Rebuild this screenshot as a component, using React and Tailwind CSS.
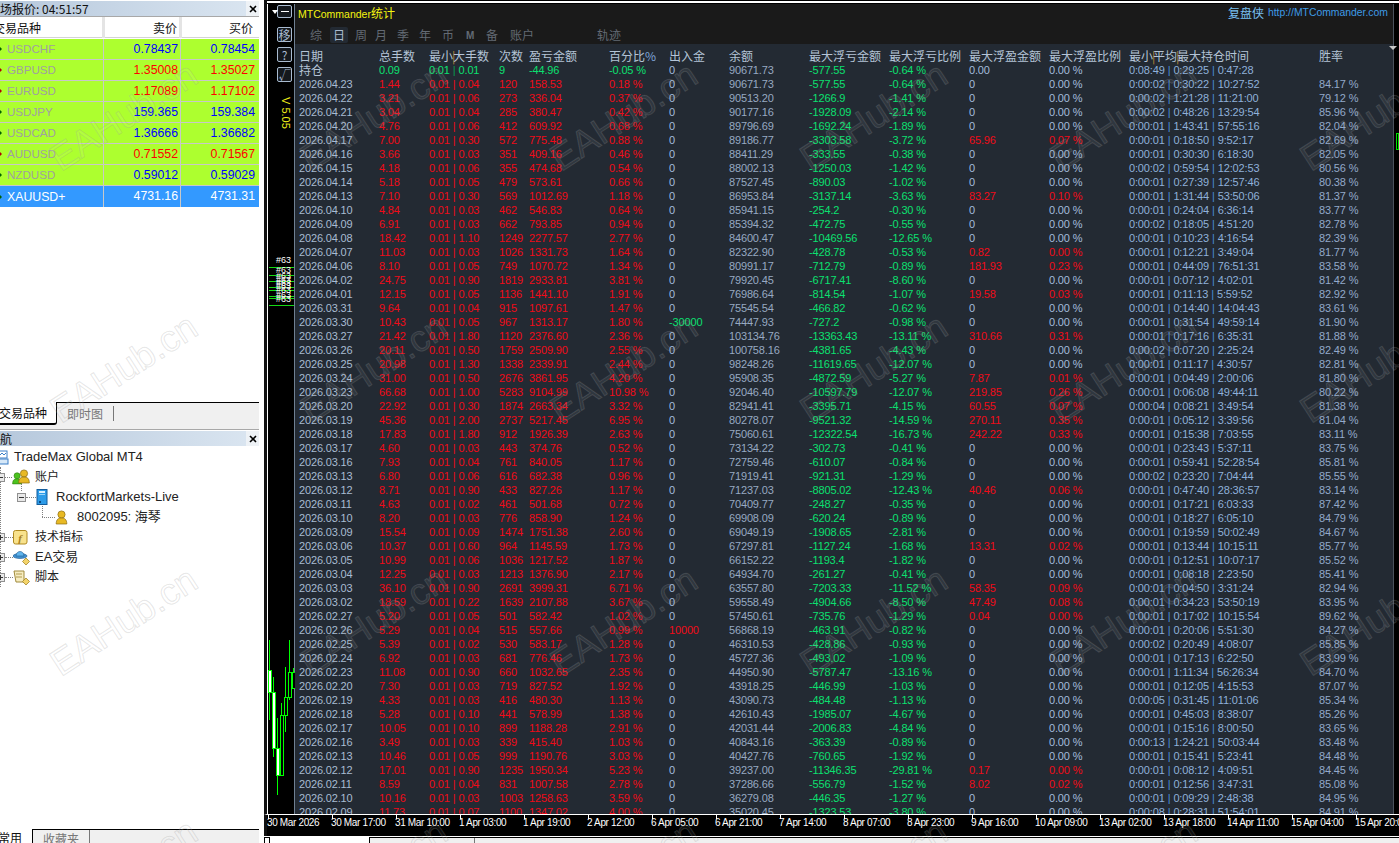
import React from "react";

const RAW = `04.23 1.44 0.04 120 158.53 0.18 0 90671.73 -577.55 -0.64 0 0.00 0:00:02 0:30:22 10:27:52 84.17
04.22 3.21 0.06 273 336.04 0.37 0 90513.20 -1266.9 -1.41 0 0.00 0:00:02 1:21:28 11:21:00 79.12
04.21 3.04 0.04 285 380.47 0.42 0 90177.16 -1928.09 -2.14 0 0.00 0:00:02 0:48:26 13:29:54 85.96
04.20 4.76 0.06 412 609.92 0.68 0 89796.69 -1692.24 -1.89 0 0.00 0:00:01 1:43:41 57:55:16 82.04
04.17 7.00 0.30 572 775.48 0.88 0 89186.77 -3303.58 -3.72 65.96 0.07 0:00:01 0:18:50 9:52:17 82.69
04.16 3.66 0.03 351 409.16 0.46 0 88411.29 -333.55 -0.38 0 0.00 0:00:01 0:30:30 6:18:30 82.05
04.15 4.18 0.06 355 474.68 0.54 0 88002.13 -1250.03 -1.42 0 0.00 0:00:02 0:59:54 12:02:53 80.56
04.14 5.18 0.05 479 573.61 0.66 0 87527.45 -890.03 -1.02 0 0.00 0:00:01 0:27:39 12:57:46 80.38
04.13 7.10 0.30 569 1012.69 1.18 0 86953.84 -3137.14 -3.63 83.27 0.10 0:00:01 1:31:44 53:50:06 81.37
04.10 4.84 0.03 462 546.83 0.64 0 85941.15 -254.2 -0.30 0 0.00 0:00:01 0:24:04 6:36:14 83.77
04.09 6.91 0.03 662 793.85 0.94 0 85394.32 -472.75 -0.55 0 0.00 0:00:02 0:18:05 4:51:20 82.78
04.08 18.42 1.10 1249 2277.57 2.77 0 84600.47 -10469.56 -12.65 0 0.00 0:00:01 0:10:23 4:16:54 82.39
04.07 11.03 0.03 1026 1331.73 1.64 0 82322.90 -428.78 -0.53 0.82 0.00 0:00:01 0:12:21 3:49:04 81.77
04.06 8.10 0.05 749 1070.72 1.34 0 80991.17 -712.79 -0.89 181.93 0.23 0:00:01 0:44:09 76:51:31 83.58
04.02 24.75 0.90 1819 2933.81 3.81 0 79920.45 -6717.41 -8.60 0 0.00 0:00:01 0:07:12 4:02:01 81.42
04.01 12.15 0.05 1136 1441.10 1.91 0 76986.64 -814.54 -1.07 19.58 0.03 0:00:01 0:11:13 5:59:52 82.92
03.31 9.64 0.04 915 1097.61 1.47 0 75545.54 -466.82 -0.62 0 0.00 0:00:01 0:14:40 14:04:43 83.61
03.30 10.43 0.05 967 1313.17 1.80 -30000 74447.93 -727.2 -0.98 0 0.00 0:00:01 0:31:54 49:59:14 81.90
03.27 21.42 1.80 1120 2376.60 2.36 0 103134.76 -13363.43 -13.11 310.66 0.31 0:00:01 0:17:16 6:35:31 81.88
03.26 20.11 0.50 1759 2509.90 2.55 0 100758.16 -4381.65 -4.43 0 0.00 0:00:02 0:07:20 2:25:24 82.49
03.25 20.98 1.30 1338 2339.91 2.44 0 98248.26 -11619.65 -12.07 0 0.00 0:00:01 0:11:17 4:30:57 82.81
03.24 31.00 0.50 2676 3861.95 4.20 0 95908.35 -4872.59 -5.27 7.87 0.01 0:00:01 0:04:49 2:00:06 81.80
03.23 66.68 1.00 5283 9104.99 10.98 0 92046.40 -10597.79 -12.07 219.85 0.26 0:00:01 0:06:08 49:44:11 80.22
03.20 22.92 0.30 1874 2663.34 3.32 0 82941.41 -3395.71 -4.15 60.55 0.07 0:00:04 0:08:21 3:49:54 81.38
03.19 45.36 2.00 2737 5217.45 6.95 0 80278.07 -9521.32 -14.59 270.11 0.35 0:00:01 0:05:12 3:39:56 81.04
03.18 17.83 1.80 912 1926.39 2.63 0 75060.61 -12322.54 -16.73 242.22 0.33 0:00:01 0:15:38 7:03:55 83.11
03.17 4.60 0.03 443 374.76 0.52 0 73134.22 -302.73 -0.41 0 0.00 0:00:01 0:23:43 5:37:11 83.75
03.16 7.93 0.04 761 840.05 1.17 0 72759.46 -610.07 -0.84 0 0.00 0:00:01 0:59:41 52:28:54 85.81
03.13 6.80 0.06 616 682.38 0.96 0 71919.41 -921.31 -1.29 0 0.00 0:00:02 0:23:20 7:04:44 85.55
03.12 8.71 0.90 433 827.26 1.17 0 71237.03 -8805.02 -12.43 40.46 0.06 0:00:01 0:47:40 28:36:57 83.14
03.11 4.63 0.02 461 501.68 0.72 0 70409.77 -248.27 -0.35 0 0.00 0:00:01 0:17:21 6:03:33 87.42
03.10 8.20 0.03 776 858.90 1.24 0 69908.09 -620.24 -0.89 0 0.00 0:00:01 0:18:27 6:05:10 84.79
03.09 15.54 0.09 1474 1751.38 2.60 0 69049.19 -1908.65 -2.81 0 0.00 0:00:01 0:19:59 50:02:49 84.67
03.06 10.37 0.60 964 1145.59 1.73 0 67297.81 -1127.24 -1.68 13.31 0.02 0:00:01 0:13:44 10:15:11 85.77
03.05 10.99 0.06 1036 1217.52 1.87 0 66152.22 -1193.4 -1.82 0 0.00 0:00:01 0:12:51 10:07:17 85.52
03.04 12.25 0.03 1213 1376.90 2.17 0 64934.70 -261.27 -0.41 0 0.00 0:00:01 0:08:18 2:23:50 85.41
03.03 36.10 0.90 2691 3999.31 6.71 0 63557.80 -7203.33 -11.52 58.35 0.09 0:00:01 0:04:50 3:31:24 82.94
03.02 18.59 0.22 1639 2107.88 3.67 0 59558.49 -4904.66 -8.50 47.49 0.08 0:00:01 0:34:23 53:50:19 83.95
02.27 5.20 0.05 501 582.42 1.02 0 57450.61 -735.76 -1.29 0.04 0.00 0:00:01 0:17:02 10:15:54 89.62
02.26 5.29 0.04 515 557.66 0.99 10000 56868.19 -463.91 -0.82 0 0.00 0:00:01 0:20:06 5:51:30 84.27
02.25 5.39 0.02 530 583.17 1.28 0 46310.53 -428.86 -0.93 0 0.00 0:00:02 0:20:49 4:08:07 85.85
02.24 6.92 0.03 681 776.46 1.73 0 45727.36 -493.02 -1.09 0 0.00 0:00:01 0:17:13 6:22:50 83.99
02.23 11.08 0.90 660 1032.65 2.35 0 44950.90 -5787.47 -13.16 0 0.00 0:00:01 1:11:34 56:26:34 84.70
02.20 7.30 0.03 719 827.52 1.92 0 43918.25 -446.99 -1.03 0 0.00 0:00:01 0:12:05 4:15:53 87.07
02.19 4.33 0.03 416 480.30 1.13 0 43090.73 -484.48 -1.13 0 0.00 0:00:05 0:31:45 11:01:06 85.34
02.18 5.28 0.10 441 578.99 1.38 0 42610.43 -1985.07 -4.67 0 0.00 0:00:01 0:45:03 8:38:07 85.26
02.17 10.05 0.10 899 1188.28 2.91 0 42031.44 -2006.83 -4.84 0 0.00 0:00:01 0:15:16 8:00:50 83.65
02.16 3.49 0.03 339 415.40 1.03 0 40843.16 -363.39 -0.89 0 0.00 0:00:13 1:24:21 50:03:44 83.48
02.13 10.46 0.05 999 1190.76 3.03 0 40427.76 -760.65 -1.92 0 0.00 0:00:01 0:15:41 5:23:41 84.48
02.12 17.01 0.90 1235 1950.34 5.23 0 39237.00 -11346.35 -29.81 0.17 0.00 0:00:01 0:08:12 4:09:51 84.45
02.11 8.59 0.04 831 1007.58 2.78 0 37286.66 -556.79 -1.52 8.02 0.02 0:00:01 0:12:56 3:47:31 85.08
02.10 10.16 0.03 1003 1258.63 3.59 0 36279.08 -446.35 -1.27 0 0.00 0:00:01 0:09:29 2:48:38 84.95
02.09 11.73 0.07 1100 1347.02 4.00 0 35020.45 -1323.53 -3.80 0 0.00 0:00:08 0:28:31 51:54:01 84.91`;

const ROWS = RAW.split("\n").map((l) => l.split(" "));

const QUOTES = [
  ["USDCHF", "0.78437", "0.78454", "blue"],
  ["GBPUSD", "1.35008", "1.35027", "red"],
  ["EURUSD", "1.17089", "1.17102", "red"],
  ["USDJPY", "159.365", "159.384", "blue"],
  ["USDCAD", "1.36666", "1.36682", "blue"],
  ["AUDUSD", "0.71552", "0.71567", "red"],
  ["NZDUSD", "0.59012", "0.59029", "blue"],
];

const AXIS = ["30 Mar 2026", "30 Mar 17:00", "31 Mar 10:00", "1 Apr 03:00", "1 Apr 19:00", "2 Apr 12:00", "6 Apr 05:00", "6 Apr 21:00", "7 Apr 14:00", "8 Apr 07:00", "8 Apr 23:00", "9 Apr 16:00", "10 Apr 09:00", "13 Apr 02:00", "13 Apr 18:00", "14 Apr 11:00", "15 Apr 04:00", "15 Apr 20:00"];

const GRID = "grid grid-cols-[80px_50px_70px_30px_80px_60px_60px_80px_80px_80px_80px_80px_190px_80px] pl-[4px] whitespace-nowrap";
const RED = "text-[#f00a18]";
const GREEN = "text-[#0be070]";
const SOFT = "text-[#a8bcd2]";
const BAL = "text-[#97a9c2]";
const ZERO = "text-[#a3bcdc]";
const TIME = "text-[#8fb1da]";
const WIN = "text-[#93a9ca]";

function Pipe({ className }) {
  return <span className={"mx-[3px] " + className}>|</span>;
}

function TimeCell({ a, b, c }) {
  return (
    <span className={TIME}>
      {a}<Pipe className="text-[#4a8fd8]" />{b}<Pipe className="text-[#4a8fd8]" />{c}
    </span>
  );
}

function Row({ r }) {
  const [d, lots, max, n, pl, pct, io, bal, ml, mlr, mp, mpr, t1, t2, t3, win] = r;
  const hot = mp !== "0";
  const ioC = io === "0" ? ZERO : io.startsWith("-") ? GREEN : RED;
  return (
    <div className={GRID + " h-[14px] leading-[14px]"}>
      <span className={SOFT}>2026.{d}</span>
      <span className={RED}>{lots}</span>
      <span className={RED}>0.01<Pipe className={RED} />{max}</span>
      <span className={RED}>{n}</span>
      <span className={RED}>{pl}</span>
      <span className={RED}>{pct} %</span>
      <span className={ioC}>{io}</span>
      <span className={BAL}>{bal}</span>
      <span className={GREEN}>{ml}</span>
      <span className={GREEN}>{mlr} %</span>
      <span className={hot ? RED : ZERO}>{mp}</span>
      <span className={hot ? RED : ZERO}>{mpr} %</span>
      <TimeCell a={t1} b={t2} c={t3} />
      <span className={WIN}>{win} %</span>
    </div>
  );
}

function Header() {
  const cjk = "text-[12px] leading-[14px] tracking-normal text-[#b4c4d6] font-['Noto_Sans_CJK_SC','Liberation_Sans',sans-serif]";
  const P = () => <span className="text-[#c08a3a] inline-block w-0 -translate-x-[1px]">|</span>;
  return (
    <div className={GRID + " h-[19px] pt-[5px] items-start " + cjk}>
      <span>日期</span>
      <span>总手数</span>
      <span>最小<P />大手数</span>
      <span>次数</span>
      <span>盈亏金额</span>
      <span>百分比<span className="text-[#7fa6d8]">%</span></span>
      <span>出入金</span>
      <span>余额</span>
      <span>最大浮亏金额</span>
      <span>最大浮亏比例</span>
      <span>最大浮盈金额</span>
      <span>最大浮盈比例</span>
      <span>最小<P />平均<P />最大持仓时间</span>
      <span>胜率</span>
    </div>
  );
}

function OpenRow() {
  return (
    <div className={GRID + " h-[14px] leading-[14px]"}>
      <span className="text-[#b4c4d6] text-[12px] tracking-normal font-['Noto_Sans_CJK_SC','Liberation_Sans',sans-serif]">持仓</span>
      <span className={GREEN}>0.09</span>
      <span className={GREEN}>0.01<Pipe className="text-[#0a9a50]" />0.01</span>
      <span className={GREEN}>9</span>
      <span className={GREEN}>-44.96</span>
      <span className={GREEN}>-0.05 %</span>
      <span className={ZERO}>0</span>
      <span className={BAL}>90671.73</span>
      <span className={GREEN}>-577.55</span>
      <span className={GREEN}>-0.64 %</span>
      <span className={ZERO}>0.00</span>
      <span className={ZERO}>0.00 %</span>
      <TimeCell a="0:08:49" b="0:29:25" c="0:47:28" />
      <span />
    </div>
  );
}

function TitleBar({ children }) {
  return (
    <div className="flex h-[15px] bg-gradient-to-r from-[#b6c8dc] to-[#dbe6f1] overflow-hidden">
      <span className="flex-1 text-[12px] leading-[15px] text-[#111] whitespace-nowrap">{children}</span>
      <span className="w-[13px] bg-[#eef2f6] flex items-center justify-center">
        <svg width="8" height="8" viewBox="0 0 8 8"><path d="M1 1l6 6M7 1L1 7" stroke="#000" strokeWidth="1.6" /></svg>
      </span>
    </div>
  );
}

function QuoteRow({ sym, bid, ask, col }) {
  const c = col === "red" ? "text-[#ff0000]" : "text-[#0000ff]";
  return (
    <div className="grid grid-cols-[104px_77px_78px] h-[21px] bg-[#adff2f] border-b border-[#c8c8c8] text-[12.3px] leading-[20px]">
      <span className="flex items-center gap-[5px] border-r border-[#c8c8c8] text-[#a0a0a0] text-[11.6px]">
        <svg width="2" height="4" viewBox="0 0 2 4"><path d="M0 0l2 2-2 2z" fill={col === "red" ? "#b00000" : "#006000"} /></svg>
        {sym}
      </span>
      <span className={"text-right pr-[2px] border-r border-[#c8c8c8] " + c}>{bid}</span>
      <span className={"text-right pr-[4px] " + c}>{ask}</span>
    </div>
  );
}

const Person = ({ x = 0, fill = "#e8b923", stroke = "#8a6a10" }) => (
  <g transform={`translate(${x} 0)`}>
    <circle cx="6" cy="4.5" r="3.6" fill={fill} stroke={stroke} strokeWidth="0.7" />
    <path d="M0.7 14c0-4.5 2-6 5.3-6s5.3 1.5 5.3 6z" fill={fill} stroke={stroke} strokeWidth="0.7" />
  </g>
);

const Icons = {
  terminal: (
    <svg width="12" height="15" viewBox="0 0 12 15" className="-ml-[3px]">
      <rect x="1" y="1" width="9" height="7" fill="#fff" stroke="#3a7fc8" />
      <rect x="0" y="9" width="11" height="5" fill="#d6e8f8" stroke="#3a7fc8" />
      <path d="M3 5l2-2 2 2 2-2" fill="none" stroke="#3a7fc8" />
    </svg>
  ),
  accounts: (
    <svg width="18" height="16" viewBox="0 0 18 16">
      <g transform="translate(0 3) scale(.85)"><Person fill="#4cc21e" stroke="#2c7a10" /></g>
      <Person x={6} />
    </svg>
  ),
  server: (
    <svg width="12" height="16" viewBox="0 0 12 16">
      <rect x="1" y="0.5" width="10" height="15" fill="#2c9be8" stroke="#125c9c" />
      <rect x="3" y="2" width="6" height="2" fill="#d8f0ff" />
      <rect x="3" y="5" width="6" height="1" fill="#9ad4f8" />
      <rect x="3" y="12" width="2" height="2" fill="#0c4c84" />
    </svg>
  ),
  person: (
    <svg width="13" height="15" viewBox="0 0 12 15"><Person /></svg>
  ),
  func: (
    <svg width="15" height="15" viewBox="0 0 15 15">
      <rect x="0.5" y="0.5" width="13.5" height="13.5" rx="2" fill="#f8e28c" stroke="#b08a20" />
      <text x="7" y="11.5" textAnchor="middle" fontSize="11" fontStyle="italic" fontWeight="700" fill="#a8801c" fontFamily="Liberation Serif">f</text>
    </svg>
  ),
  hat: (
    <svg width="18" height="15" viewBox="0 0 18 15">
      <ellipse cx="7" cy="6" rx="7" ry="2.5" fill="#3f90d0" stroke="#1c5a90" strokeWidth="0.6" />
      <path d="M3 6c0-6 8-6 8 0z" fill="#60b4ec" stroke="#1c5a90" strokeWidth="0.6" />
      <path d="M13 8l3.5 3.5L13 15l-3.5-3.5z" fill="#f3d36a" stroke="#9a7a18" strokeWidth="0.7" />
    </svg>
  ),
  script: (
    <svg width="18" height="15" viewBox="0 0 18 15">
      <path d="M1 1h10v11H3z" fill="#f6ecc0" stroke="#a08a3c" />
      <path d="M3 4h6M3 7h6" stroke="#b09a50" />
      <path d="M13 8l3.5 3.5L13 15l-3.5-3.5z" fill="#f3d36a" stroke="#9a7a18" strokeWidth="0.7" />
    </svg>
  ),
};

function TreeBox({ sign }) {
  return (
    <span className="relative w-[9px] h-[9px] shrink-0 border border-[#909090] bg-[#e8e8e8] flex items-center justify-center">
      <span className="block w-[5px] h-px bg-[#333]" />
      {sign === "+" && <span className="absolute w-px h-[5px] bg-[#333]" />}
    </span>
  );
}

const Dots = ({ w }) => <span className="border-t border-dotted border-[#808080] shrink-0 h-0" style={{ width: w }} />;

function TreeRow({ indent, box, dots, icon, text, gap, cjk, up }) {
  return (
    <div className="relative flex items-center h-[20px] whitespace-nowrap text-[13px] text-[#222]" style={{ marginLeft: indent }}>
      {up && <span className="absolute left-0 border-l border-dotted border-[#808080]" style={{ left: up[0], top: up[1], height: up[2] }} />}
      {box && <TreeBox sign={box} />}
      {dots ? <Dots w={dots} /> : null}
      {icon}
      <span className={cjk ? "text-[12px]" : ""} style={{ marginLeft: gap }}>{text}</span>
    </div>
  );
}

function LeftPanel() {
  const cjk = "font-['Noto_Sans_CJK_SC','Liberation_Sans',sans-serif]";
  return (
    <aside className={"w-[264px] shrink-0 h-full flex flex-col bg-white overflow-hidden pr-[5px] " + cjk}>
      <div className="pt-[1px]">
        <TitleBar><span className="-ml-[12px] inline-block">市场报价: 04:51:57</span></TitleBar>
      </div>
      <div className="h-px bg-[#a8a8a8]" />
      <div className="grid grid-cols-[105px_77px_77px] h-[21px] text-[12px] leading-[21px] text-[#111] border-b border-[#d4d4d4]">
        <span className="border-r-[3px] border-[#e4e4e4] whitespace-nowrap overflow-hidden"><span className="-ml-[7px] inline-block">交易品种</span></span>
        <span className="text-right pr-[2px] border-r-[3px] border-[#e4e4e4]">卖价</span>
        <span className="text-right pr-[6px]">买价</span>
      </div>
      <div className="mt-[1px] font-['Liberation_Sans',sans-serif]">
        {QUOTES.map((q) => <QuoteRow key={q[0]} sym={q[0]} bid={q[1]} ask={q[2]} col={q[3]} />)}
        <div className="grid grid-cols-[104px_77px_78px] h-[21px] bg-[#3399ff] text-white text-[12.3px] leading-[20px]">
          <span className="flex items-center gap-[5px] border-r border-[#c8c8c8]">
            <svg width="2" height="4" viewBox="0 0 2 4"><path d="M0 0l2 2-2 2z" fill="#006000" /></svg>
            XAUUSD+
          </span>
          <span className="text-right pr-[2px] border-r border-[#c8c8c8]">4731.16</span>
          <span className="text-right pr-[4px]">4731.31</span>
        </div>
      </div>
      <div className="h-[195px] shrink-0" />
      <div className="h-[24px] flex bg-[#f0f0f0] text-[12px] leading-[21px] shrink-0 border-b border-[#f0f0f0]">
        <span className="w-[57px] bg-white border-r border-b-2 border-black rounded-br-[3px] overflow-hidden whitespace-nowrap text-[#111]"><span className="-ml-[1px] inline-block">交易品种</span></span>
        <span className="flex-1 border-t border-black text-[#777] flex items-start">
          <span className="pl-[10px] pr-[10px] border-r border-[#777] h-[15px] mt-[3px] leading-[15px]">即时图</span>
        </span>
      </div>
      <div className="h-[4px] bg-[#f0f0f0] border-b border-[#a8a8a8] shrink-0" />
      <div className="mt-[1px]">
        <TitleBar><span className="-ml-[12px] inline-block">导航</span></TitleBar>
      </div>
      <div className="mt-[1px] font-['Liberation_Sans','Noto_Sans_CJK_SC',sans-serif]">
        <TreeRow indent={0} icon={Icons.terminal} text="TradeMax Global MT4" gap={5} />
        <div className="border-l border-dotted border-[#808080]">
          <TreeRow indent={-5} box="-" dots={7} icon={Icons.accounts} text="账户" gap={5} cjk />
          <TreeRow indent={16} box="-" dots={10} icon={Icons.server} text="RockfortMarkets-Live" gap={8} up={[4, -3, 7]} />
          <TreeRow indent={41} dots={13} icon={Icons.person} text="8002095: 海琴" gap={9} up={[0, -1, 11]} />
          <TreeRow indent={-5} box="+" dots={8} icon={Icons.func} text="技术指标" gap={7} cjk />
          <TreeRow indent={-5} box="+" dots={8} icon={Icons.hat} text="EA交易" gap={4} />
          <TreeRow indent={-5} box="+" dots={8} icon={Icons.script} text="脚本" gap={4} cjk />
        </div>
      </div>
      <div className="flex-1" />
      <div className="h-[14px] shrink-0 flex text-[12px] leading-[18px] overflow-hidden">
        <span className="w-[33px] bg-white border-r border-black whitespace-nowrap text-[#111]"><span className="-ml-[2px] inline-block">常用</span></span>
        <span className="flex-1 bg-[#f0f0f0] border-t border-black text-[#777]">
          <span className="inline-block pl-[10px] pr-[10px] border-r border-[#777]">收藏夹</span>
        </span>
      </div>
    </aside>
  );
}

function RailButton({ children }) {
  return (
    <span className="w-[15px] h-[15px] border border-[#a9bbd0] rounded-[2px] text-[#a9bbd0] text-[12px] leading-[13px] text-center font-['Noto_Sans_CJK_SC','Liberation_Sans',sans-serif] bg-[#14181d]">
      {children}
    </span>
  );
}

function ChartSvg() {
  const candles = [
    [268.5, 640, 720, 670, 692, "#fff"],
    [272.5, 677, 757, 692, 748, "#fff"],
    [276.5, 718, 795, 748, 775, "#fff"],
    [280.5, 703, 775, 715, 775, "#000"],
    [284.5, 667, 732, 697, 715, "#000"],
    [288.5, 640, 700, 672, 697, "#000"],
    [292.5, 668, 688, 672, 688, "#000"],
  ];
  const lines = [267, 275, 281, 287, 290, 296, 298, 305];
  const tags = [260, 270, 276, 280, 283, 286, 290, 295, 299];
  return (
    <svg className="absolute left-0 top-0 pointer-events-none" width="27" height="810" viewBox="267 4 27 810">
      {lines.map((y) => <line key={y} x1="268" x2="293" y1={y + 0.5} y2={y + 0.5} stroke="#16d916" />)}
      {tags.map((y) => (
        <text key={y} x="275" y={y + 3} fontSize="9" fill="#fff" fontFamily="Liberation Sans">#63</text>
      ))}
      {candles.map(([x, t, b, bt, bb, f]) => (
        <g key={x}>
          <line x1={x} x2={x} y1={t} y2={b} stroke="#00ff00" />
          <rect x={x - 1} y={bt + 0.5} width="3" height={bb - bt} fill={f} stroke="#00ff00" />
        </g>
      ))}
    </svg>
  );
}

function ChartWindow() {
  return (
    <main className="flex-1 h-full flex flex-col min-w-0">
      <div className="h-[4px] bg-black flex flex-col justify-center shrink-0 border-l-[3px] border-[#111]"><div className="h-[2px] bg-white" /></div>
      <div className="flex h-[810px] bg-black shrink-0 border-l-[3px] border-[#111]">
        <div className="relative w-[27px] shrink-0 border-l border-white pl-[9px] flex flex-col items-start pt-[1px]">
          <ChartSvg />
          <span className="relative w-[15px] h-[13px] border border-[#a9bbd0] rounded-[2px] flex items-center justify-center bg-[#14181d]">
            <span className="block w-[8px] h-px bg-white" />
            <span className="absolute -left-[6px] top-[4px] w-0 h-0 border-x-[3px] border-x-transparent border-t-[4px] border-t-white" />
          </span>
          <div className="flex flex-col gap-[5px] mt-[9px]">
            <RailButton>移</RailButton>
            <RailButton>?</RailButton>
            <RailButton>√</RailButton>
          </div>
          <span className="relative [writing-mode:vertical-rl] text-[#f2f21a] text-[11px] leading-[12px] mt-[15px] ml-[3px] font-['Liberation_Sans',sans-serif]">V 5.05</span>
        </div>
        <div className="w-[1099px] shrink-0 flex flex-col border-l border-[#6f8092] bg-[#232a33] overflow-hidden">
          <div className="h-[40px] bg-[#1a1a1a] shrink-0 flex flex-col">
            <div className="flex items-center justify-between h-[18px] pl-[3px] pr-[5px]">
              <span className="text-[#f4f410] text-[10.5px] font-['Liberation_Sans',sans-serif]">MTCommander<span className="text-[12px] font-['Noto_Sans_CJK_SC',sans-serif]">统计</span></span>
              <span className="flex items-center gap-[4px] text-[10.4px] font-['Liberation_Sans',sans-serif]">
                <span className="text-[#79c0f2] text-[12px] font-['Noto_Sans_CJK_SC',sans-serif]">复盘侠</span>
                <span className="text-[#3f9be6]">http://MTCommander.com</span>
              </span>
            </div>
            <div className="flex items-center h-[18px] mt-[4px] text-[12px] text-[#636a74] font-['Noto_Sans_CJK_SC','Liberation_Sans',sans-serif]">
              <span className="ml-[15px] w-[12px]">综</span>
              <span className="ml-[8px] w-[18px] h-[16px] leading-[16px] text-center bg-[#232a33] rounded-[2px] text-[#a9bbd0]">日</span>
              <span className="ml-[7px] w-[12px]">周</span>
              <span className="ml-[8px] w-[12px]">月</span>
              <span className="ml-[10px] w-[12px]">季</span>
              <span className="ml-[10px] w-[12px]">年</span>
              <span className="ml-[11px] w-[12px]">币</span>
              <span className="ml-[12px] w-[10px] font-bold text-[10px] font-['Liberation_Sans',sans-serif]">M</span>
              <span className="ml-[10px] w-[12px]">备</span>
              <span className="ml-[12px] w-[24px]">账户</span>
              <span className="ml-[63px]">轨迹</span>
            </div>
          </div>
          <div className="flex-1 overflow-hidden text-[11px] font-['Liberation_Sans',sans-serif] tracking-[-0.15px]">
            <Header />
            <OpenRow />
            {ROWS.map((r) => <Row key={r[0]} r={r} />)}
          </div>
        </div>
        <div className="relative flex-1 border-l border-[#4a525c]">
          <span className="absolute left-[-5px] top-[42px] w-0 h-0 border-x-[4px] border-x-transparent border-t-[4px] border-t-[#c8c8c8]" />
          <span className="absolute left-[2px] top-[129px] w-[3px] h-[17px] border border-[#00e000]" />
        </div>
      </div>
      <div className="h-[22px] bg-black border-t border-white border-l-[3px] border-l-[#111] shrink-0 flex pl-[1px] overflow-hidden">
        {AXIS.map((t) => (
          <span key={t} className="w-[64px] shrink-0 border-l border-white h-[4px] overflow-visible whitespace-nowrap text-white text-[10px] font-['Liberation_Sans',sans-serif]">
            <span className="block -ml-[2px] mt-[2px] leading-[12px] tracking-[-0.35px]">{t}</span>
          </span>
        ))}
      </div>
      <div className="flex-1 bg-white flex pt-[1px]">
        <span className="w-[6px] border border-b-0 border-black" />
        <span className="ml-[99px] flex-1 bg-[#f0f0f0] border-l border-t border-black flex">
          <span className="w-[105px] border-r border-[#777]" />
        </span>
      </div>
    </main>
  );
}

function Watermarks() {
  const xs = [65, 315, 565, 815, 1065, 1315];
  const ys = [179, 431, 684, 936];
  const marks = [];
  ys.forEach((y) => xs.forEach((x) => marks.push([x, y])));
  return (
    <div className="absolute inset-0 overflow-hidden pointer-events-none">
      {marks.map(([x, y]) => (
        <span
          key={`${x}-${y}`}
          className="absolute origin-bottom-left -rotate-[33deg] text-[37px] leading-[40px] whitespace-nowrap text-[rgba(255,255,255,0.08)] [-webkit-text-stroke:1px_rgba(150,150,150,0.24)] font-['Liberation_Sans',sans-serif]"
          style={{ left: x, top: y - 40 }}
        >
          EAHub.cn
        </span>
      ))}
    </div>
  );
}

export default function App() {
  return (
    <div className="relative w-[1399px] h-[843px] flex overflow-hidden bg-white">
      <LeftPanel />
      <ChartWindow />
      <Watermarks />
    </div>
  );
}
